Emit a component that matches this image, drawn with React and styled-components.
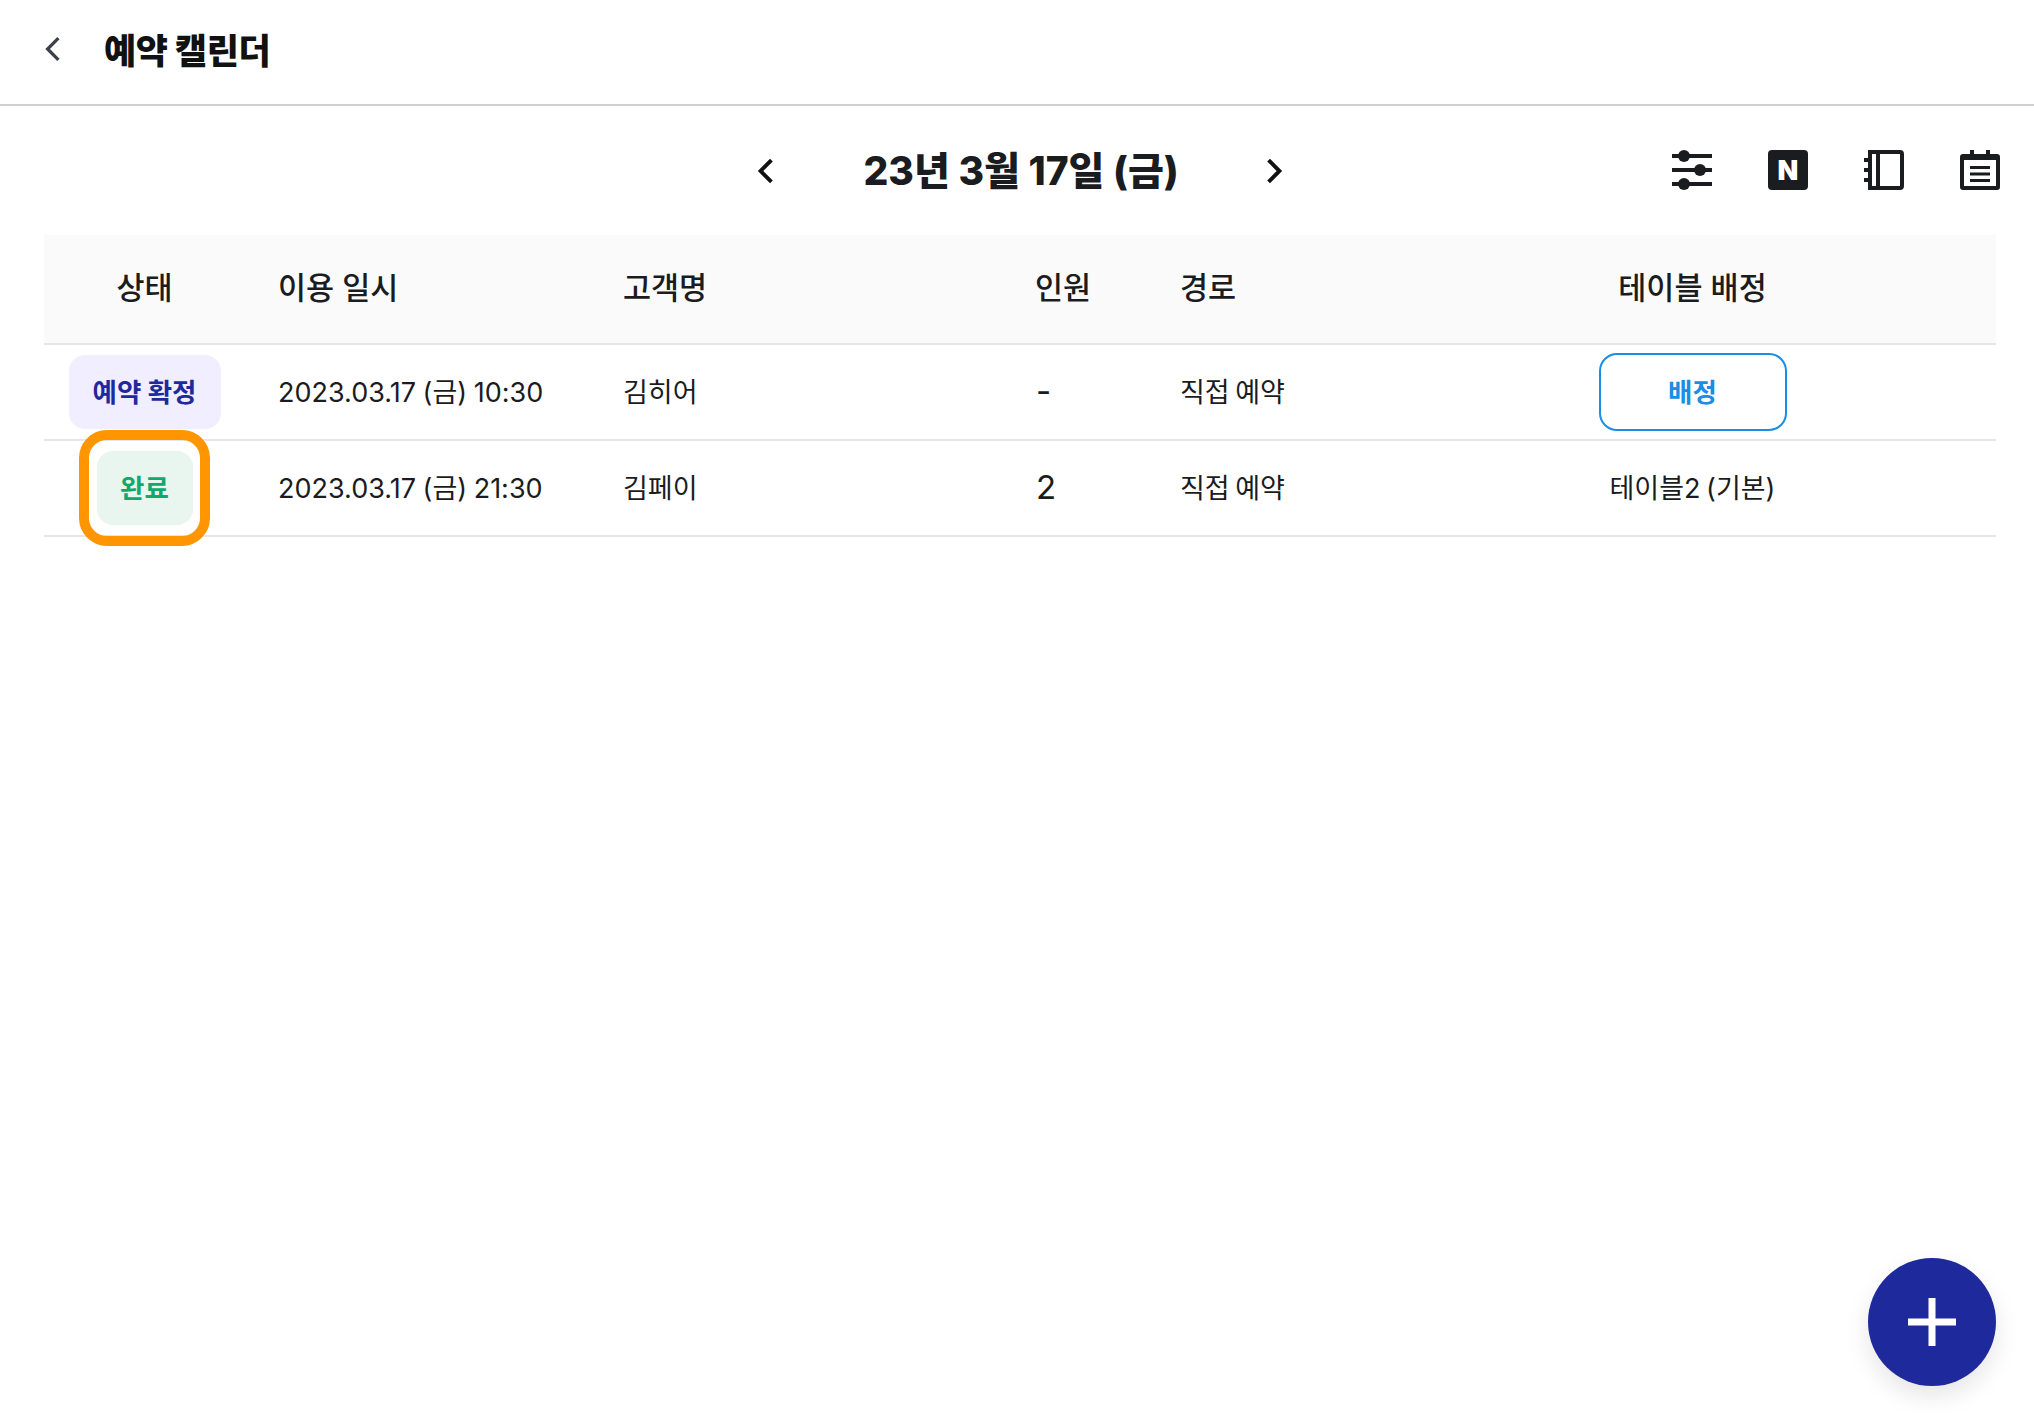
import React from 'react';
import styled, { createGlobalStyle } from 'styled-components';

const GlobalStyle = createGlobalStyle`
    html, body {
        margin: 0;
        padding: 0;
        background: #fff;
    }
    body {
        font-family: Inter, "Noto Sans CJK KR", "Noto Sans", sans-serif;
        color: #1a1c20;
    }
`;

const COLUMNS = '201px 345px 412px 145px 242px 607px';

const reservations = [
    {
        status: '예약 확정',
        kind: 'confirmed',
        date: '2023.03.17 (금) 10:30',
        name: '김히어',
        people: '-',
        route: '직접 예약',
    },
    {
        status: '완료',
        kind: 'done',
        date: '2023.03.17 (금) 21:30',
        name: '김페이',
        people: '2',
        route: '직접 예약',
        table: '테이블2 (기본)',
    },
];

const Chevron = ({ dir, size, width, color }) => (
    <svg width={size} height={size} viewBox="0 0 24 24" fill="none">
        <path
            d={dir === 'left' ? 'M17 2 7 12l10 10' : 'M7 2l10 10L7 22'}
            stroke={color}
            strokeWidth={width}
        />
    </svg>
);

const SlidersIcon = () => (
    <svg width="40" height="40" viewBox="0 0 40 40" fill="#1a1c20">
        <rect y="4" width="40" height="4" />
        <rect y="18" width="40" height="4" />
        <rect y="32" width="40" height="4" />
        <circle cx="12" cy="6" r="6" />
        <circle cx="28" cy="20" r="6" />
        <circle cx="12" cy="34" r="6" />
    </svg>
);

const NotebookIcon = () => (
    <svg width="40" height="40" viewBox="0 0 40 40" fill="#1a1c20">
        <path
            fillRule="evenodd"
            d="M4 0h32a4 4 0 0 1 4 4v32a4 4 0 0 1-4 4H4zM8 4v32h4V4zM16 4v32h20V4z"
        />
        <rect y="8" width="4" height="4" />
        <rect y="18" width="4" height="4" />
        <rect y="28" width="4" height="4" />
    </svg>
);

const CalendarIcon = () => (
    <svg width="40" height="40" viewBox="0 0 40 40" fill="#1a1c20">
        <rect x="10" width="4" height="6" />
        <rect x="26" width="4" height="6" />
        <rect y="4" width="40" height="36" rx="3" />
        <rect x="4" y="10" width="32" height="26" fill="#fff" />
        <rect x="10" y="16" width="20" height="3" />
        <rect x="10" y="22.5" width="20" height="3" />
        <rect x="10" y="29" width="20" height="3" />
    </svg>
);

export default function App() {
    return (
        <Page>
            <GlobalStyle />
            <TopBar>
                <BackButton>
                    <Chevron dir="left" size={26} width={3} color="#3c404b" />
                </BackButton>
                <PageTitle>예약 캘린더</PageTitle>
            </TopBar>

            <DateBar>
                <DateNav>
                    <ArrowButton>
                        <Chevron dir="left" size={26} width={3.6} color="#111" />
                    </ArrowButton>
                    <DateTitle>23년 3월 17일 (금)</DateTitle>
                    <ArrowButton>
                        <Chevron dir="right" size={26} width={3.6} color="#111" />
                    </ArrowButton>
                </DateNav>
                <Tools>
                    <SlidersIcon />
                    <NaverBadge>N</NaverBadge>
                    <NotebookIcon />
                    <CalendarIcon />
                </Tools>
            </DateBar>

            <Table>
                <HeadRow>
                    <HeadCell $center>상태</HeadCell>
                    <HeadCell>이용 일시</HeadCell>
                    <HeadCell>고객명</HeadCell>
                    <HeadCell>인원</HeadCell>
                    <HeadCell>경로</HeadCell>
                    <HeadCell $center>테이블 배정</HeadCell>
                </HeadRow>
                {reservations.map(item => (
                    <Row key={item.date}>
                        <Cell $center>
                            <StatusChip $kind={item.kind}>
                                <ChipLabel>{item.status}</ChipLabel>
                                {item.kind === 'done' && <Highlight />}
                            </StatusChip>
                        </Cell>
                        <Cell>
                            <DateText>{item.date}</DateText>
                        </Cell>
                        <Cell>
                            <CellText>{item.name}</CellText>
                        </Cell>
                        <Cell>
                            <People>{item.people}</People>
                        </Cell>
                        <Cell>
                            <CellText>{item.route}</CellText>
                        </Cell>
                        <Cell $center>
                            {item.table ? (
                                <CellText>{item.table}</CellText>
                            ) : (
                                <AssignButton>
                                    <ChipLabel>배정</ChipLabel>
                                </AssignButton>
                            )}
                        </Cell>
                    </Row>
                ))}
            </Table>

            <AddButton>
                <svg width="48" height="48" viewBox="0 0 48 48" fill="#fff">
                    <rect y="20.5" width="48" height="7" />
                    <rect x="20.5" width="7" height="48" />
                </svg>
            </AddButton>
        </Page>
    );
}

const Page = styled.div`
    position: relative;
    width: 2034px;
    height: 1426px;
    overflow: hidden;
    background: #fff;
`;

const TopBar = styled.header`
    display: flex;
    align-items: center;
    height: 104px;
    padding-left: 40px;
    border-bottom: 2px solid #d0d0d0;
`;

const BackButton = styled.div`
    display: flex;
    width: 26px;
    height: 26px;
    margin: -6px 38px 0 0;
`;

const PageTitle = styled.h1`
    margin: -8px 0 0;
    font-size: 35px;
    font-weight: 800;
    letter-spacing: -0.4px;
    color: #111;
`;

const DateBar = styled.div`
    position: relative;
    display: flex;
    justify-content: center;
    align-items: center;
    height: 129px;
`;

const DateNav = styled.div`
    display: flex;
    align-items: center;
    gap: 85px;
    margin-left: 4px;
`;

const ArrowButton = styled.div`
    display: flex;
    margin-left: 1px;
`;

const DateTitle = styled.div`
    width: 311px;
    margin-top: -5px;
    font-size: 39px;
    font-weight: 800;
    white-space: nowrap;
    text-align: center;
`;

const Tools = styled.div`
    position: absolute;
    right: 34px;
    top: 44px;
    display: flex;
    gap: 56px;
`;

const NaverBadge = styled.div`
    display: flex;
    align-items: center;
    justify-content: center;
    width: 40px;
    height: 40px;
    border-radius: 4px;
    background: #1a1c20;
    color: #fff;
    font-size: 27px;
    font-weight: 900;
`;

const Table = styled.div`
    margin: 0 38px 0 44px;
`;

const HeadRow = styled.div`
    display: grid;
    grid-template-columns: ${COLUMNS};
    align-items: center;
    height: 108px;
    background: #fafafa;
    border-bottom: 2px solid #e6e6e6;
`;

const HeadCell = styled.div`
    padding-left: ${({ $center }) => ($center ? '0' : '33px')};
    margin-top: -6px;
    text-align: ${({ $center }) => ($center ? 'center' : 'left')};
    font-size: 30.5px;
    font-weight: 500;
    color: #1a1c20;
`;

const Row = styled.div`
    display: grid;
    grid-template-columns: ${COLUMNS};
    align-items: center;
    height: 94px;
    border-bottom: 2px solid #e6e6e6;
`;

const Cell = styled.div`
    display: flex;
    justify-content: ${({ $center }) => ($center ? 'center' : 'flex-start')};
    padding-left: ${({ $center }) => ($center ? '0' : '33px')};
`;

const CellText = styled.span`
    padding-bottom: 4px;
    font-size: 27px;
    font-weight: 400;
    word-spacing: -2px;
    white-space: nowrap;
`;

const DateText = styled(CellText)`
    word-spacing: -1px;
`;

const People = styled.span`
    padding: 0 0 2px 1px;
    font-size: 33px;
`;

const ChipLabel = styled.span`
    padding-bottom: 3px;
`;

const StatusChip = styled.div`
    position: relative;
    display: flex;
    align-items: center;
    justify-content: center;
    width: ${({ $kind }) => ($kind === 'done' ? '96px' : '152px')};
    height: 74px;
    border-radius: 16px;
    font-size: 26.5px;
    font-weight: 700;
    white-space: nowrap;
    background: ${({ $kind }) => ($kind === 'done' ? '#e9f5ef' : '#f0eeff')};
    color: ${({ $kind }) => ($kind === 'done' ? '#10a96c' : '#1e2a9b')};
`;

const Highlight = styled.span`
    position: absolute;
    inset: -21px -17px -21px -18px;
    border: 10px solid #ff9500;
    border-radius: 28px;
`;

const AssignButton = styled.div`
    display: flex;
    align-items: center;
    justify-content: center;
    width: 188px;
    height: 78px;
    box-sizing: border-box;
    border: 2px solid #1b8de6;
    border-radius: 18px;
    font-size: 26.5px;
    font-weight: 700;
    color: #1b8de6;
`;

const AddButton = styled.div`
    position: absolute;
    right: 38px;
    bottom: 40px;
    display: flex;
    align-items: center;
    justify-content: center;
    width: 128px;
    height: 128px;
    border-radius: 50%;
    background: #1e2a9b;
    box-shadow: 0 10px 24px rgba(0, 0, 0, 0.1);
`;
